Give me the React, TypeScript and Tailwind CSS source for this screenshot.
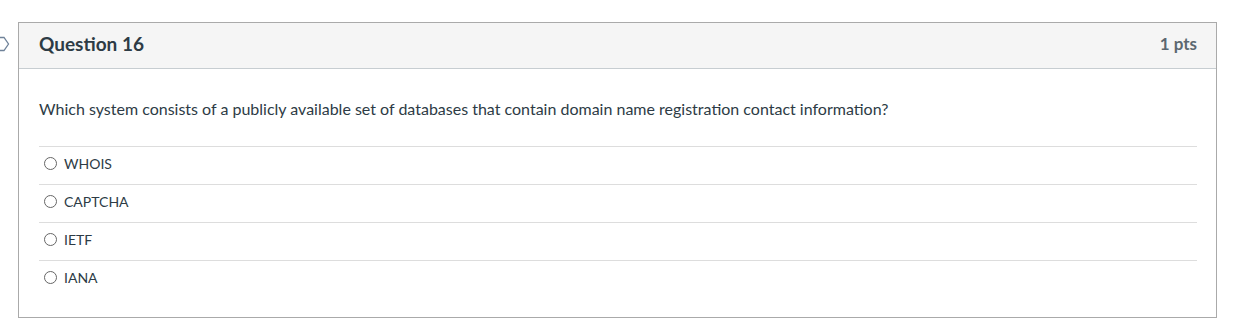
import React from "react";

const options = ["WHOIS", "CAPTCHA", "IETF", "IANA"];

export default function App() {
  return (
    <div className="relative w-[1234px] h-[332px] bg-white" style={{ fontFamily: "Lato, 'Noto Sans', sans-serif" }}>
      <svg className="absolute left-0 top-[36px]" width="10" height="16" viewBox="0 0 10 16">
        <path d="M-2 1.5 H4 L8.5 8 L4 14.5 H-2" fill="none" stroke="#6f8299" strokeWidth="1.3" />
      </svg>
      <div className="pt-[22px] pl-[18px] w-[1217px]">
        <div className="border border-[#aaaaaa] h-[296px] flex flex-col">
          <div className="h-[46px] bg-[#f5f5f5] border-b border-[#c7cdd1] flex items-center justify-between pl-[20px] pr-[19px] pb-[3px]">
            <span className="text-[19px] font-bold text-[#2d3b45]">Question 16</span>
            <span className="text-[17px] font-bold text-[#5b6770]">1 pts</span>
          </div>
          <div className="pl-[20px] pr-[19px] pt-[30px]">
            <p className="text-[16px] text-[#2d3b45] leading-[20px]">
              Which system consists of a publicly available set of databases that contain domain name registration contact information?
            </p>
            <div className="mt-[27px]">
              {options.map((o) => (
                <div key={o} className="border-t border-[#dddddd] h-[38px] flex items-center pl-[5px] pb-[5px]">
                  <span className="w-[13px] h-[13px] rounded-full border border-[#666666] bg-white" />
                  <span className="ml-[7px] text-[14px] text-[#2d3b45]">{o}</span>
                </div>
              ))}
            </div>
          </div>
        </div>
      </div>
    </div>
  );
}
